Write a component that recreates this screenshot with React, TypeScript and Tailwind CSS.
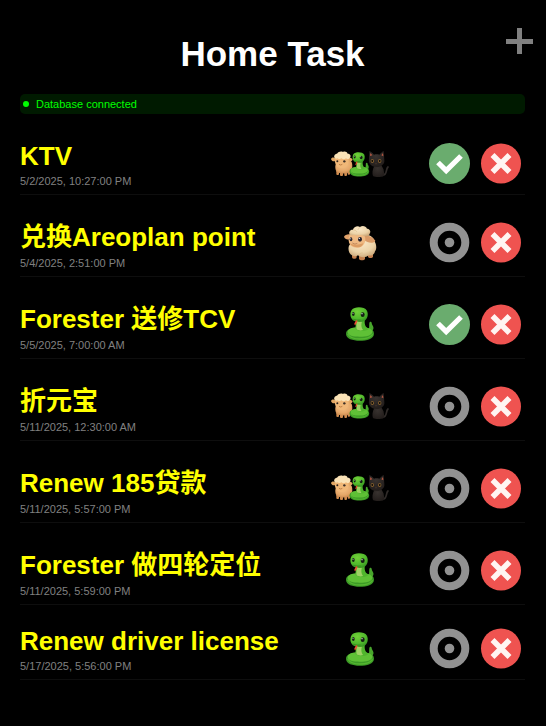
import React from "react";

type Owner = "sheep" | "snake" | "all";

interface Task {
  title: string;
  due: string;
  owner: Owner;
  done: boolean;
}

const tasks: Task[] = [
  { title: "KTV", due: "5/2/2025, 10:27:00 PM", owner: "all", done: true },
  { title: "兑换Areoplan point", due: "5/4/2025, 2:51:00 PM", owner: "sheep", done: false },
  { title: "Forester 送修TCV", due: "5/5/2025, 7:00:00 AM", owner: "snake", done: true },
  { title: "折元宝", due: "5/11/2025, 12:30:00 AM", owner: "all", done: false },
  { title: "Renew 185贷款", due: "5/11/2025, 5:57:00 PM", owner: "all", done: false },
  { title: "Forester 做四轮定位", due: "5/11/2025, 5:59:00 PM", owner: "snake", done: false },
  { title: "Renew driver license", due: "5/17/2025, 5:56:00 PM", owner: "snake", done: false },
];

const hasChinese = (text: string) => /[\u4e00-\u9fff]/.test(text);

function Gradients() {
  return (
    <svg className="absolute h-0 w-0" aria-hidden="true">
      <defs>
        <radialGradient id="wool" cx="0.45" cy="0.3" r="0.8">
          <stop offset="0" stopColor="#fbe9c8" />
          <stop offset="0.6" stopColor="#ecd3a8" />
          <stop offset="1" stopColor="#c49c6c" />
        </radialGradient>
        <radialGradient id="face" cx="0.45" cy="0.35" r="0.8">
          <stop offset="0" stopColor="#f6c48b" />
          <stop offset="0.6" stopColor="#e5a768" />
          <stop offset="1" stopColor="#b87540" />
        </radialGradient>
        <radialGradient id="scale" cx="0.4" cy="0.3" r="0.8">
          <stop offset="0" stopColor="#72d038" />
          <stop offset="0.6" stopColor="#50b82c" />
          <stop offset="1" stopColor="#2f8a1e" />
        </radialGradient>
        <radialGradient id="fur" cx="0.45" cy="0.3" r="0.8">
          <stop offset="0" stopColor="#38322f" />
          <stop offset="1" stopColor="#201b19" />
        </radialGradient>
      </defs>
    </svg>
  );
}

function Sheep() {
  return (
    <svg viewBox="30 21 120 120" className="h-10 w-10" role="img" aria-label="Sheep">
      <g fill="#c4804e">
        <rect x="66" y="112" width="14" height="19" rx="5" />
        <rect x="87" y="114" width="18" height="22" rx="6" />
        <rect x="114" y="110" width="15" height="19" rx="5" />
      </g>
      <path
        d="M57 92c-4 12 0 25 9 29 6 4 13 3 18 0 8 8 24 8 32 0 9 3 18-3 19-12 6-8 4-20 0-27-2-13-14-24-28-22-20-2-37 14-50 32z"
        fill="url(#wool)"
      />
      <path d="M85 121c3-5 9-8 13-7m18 7c3-3 5-7 5-11" fill="none" stroke="#d8b888" strokeWidth="2" />
      <path d="M62 58c-9-2-18 2-20 7 3 8 10 10 18 7z" fill="#e2a26a" />
      <path d="M103 62c12-3 26 5 33 15-4 9-22 8-33-1z" fill="#d99a66" />
      <path d="M59 59c10-10 38-9 45 4 5 13 0 26-10 32-11 6-27 3-34-6-5-8-6-21-1-30z" fill="#efb982" />
      <path d="M59 84c7 6 25 7 41 1-2 5-4 8-8 10-10 4-27 1-33-11z" fill="#dc9c62" />
      <path
        d="M58 56c-2-7 4-13 11-12 2-9 14-13 21-8 7-6 18-3 21 5 8 0 13 8 8 15-2 7-11 10-18 7-6-5-10-2-15-3-6 3-11 1-14-1-5 3-12 3-14-3z"
        fill="url(#wool)"
      />
      <path d="M71 46c4-1 8 1 9 4m11-13c-5 2-7 5-7 8" fill="none" stroke="#dbbe90" strokeWidth="2" />
      <ellipse cx="63" cy="73" rx="4" ry="6" fill="#28242d" />
      <ellipse cx="90" cy="73" rx="6" ry="7" fill="#28242d" />
      <circle cx="62" cy="71" r="1.5" fill="#fff" />
      <circle cx="88" cy="70" r="2" fill="#fff" />
      <path d="M67 84q8 6 15 1" fill="none" stroke="#a9714a" strokeWidth="2" />
    </svg>
  );
}

function SnakeShape() {
  return (
    <>
      <path d="M112 114c7-8 5-17 6-28 1-5 6-5 7-1 0 6 4 8 5 13 2 8-4 16-18 16z" fill="#48a62c" />
      <path d="M48 118c0-13 18-19 40-19s44 3 44 19c0 16-22 21-43 21s-41-6-41-21z" fill="#3c9a26" />
      <path d="M53 113c0-10 16-14 37-14 19 0 37 3 37 13 0 11-19 15-38 15s-36-3-36-14z" fill="#5fc036" />
      <path d="M53 119c8 13 22 15 37 15 16 0 30-3 38-14" fill="none" stroke="#55b631" strokeWidth="4" />
      <path d="M76 74c4 10 0 19 0 29 7 9 31 10 39 1-10-7-13-16-10-32z" fill="#50b52d" />
      <path d="M79 80c2 9-1 17 1 25 5 4 14 4 19 2-6-7-6-16-3-26z" fill="#9ed164" />
      <path d="M65 47c8-11 38-11 46 2 5 11 2 24-8 31-10 4-23 3-30 0-12-5-15-22-8-33z" fill="url(#scale)" />
      <ellipse cx="70" cy="59" rx="4" ry="6" fill="#152014" />
      <ellipse cx="98" cy="61" rx="6" ry="7" fill="#152014" />
      <circle cx="69" cy="57" r="1.5" fill="#e7ffe7" />
      <circle cx="96" cy="58" r="2" fill="#e7ffe7" />
      <path d="M70 75q10 4 22 2" fill="none" stroke="#2c801a" strokeWidth="2" />
      <path d="M80 78c-1 6-4 7-5 13" fill="none" stroke="#ed4a32" strokeWidth="5" />
    </>
  );
}

function Snake() {
  return (
    <svg viewBox="30 29 120 120" className="h-10 w-10" role="img" aria-label="Snake">
      <SnakeShape />
    </svg>
  );
}

function Everyone() {
  return (
    <svg viewBox="30 12 180 120" className="h-10 w-15" role="img" aria-label="Sheep, snake and cat">
      <g fill="#d18c4e">
        <rect x="49" y="91" width="8" height="14" rx="3" />
        <rect x="60" y="93" width="9" height="15" rx="3" />
        <rect x="73" y="93" width="8" height="15" rx="3" />
        <rect x="83" y="88" width="7" height="16" rx="3" />
      </g>
      <path d="M46 77c-1 12 3 21 13 22 8 3 22 2 29-3 9-3 11-18 7-30-10-14-41-13-49 11z" fill="url(#face)" />
      <path d="M47 54c-7-3-13-2-14 3 2 7 9 9 14 5zM81 55c7-3 15-1 17 4-4 7-12 7-17 3z" fill="#e2a764" />
      <path d="M46 54c3-14 34-15 39 0 3 12-1 24-9 28-8 4-20 3-26-4-5-7-7-16-4-24z" fill="#f1b878" />
      <path
        d="M43 52c-2-6 3-11 8-11 4-6 12-8 18-5 6-3 12 0 14 5 7 0 11 6 7 12-3 5-9 5-12 2-5 4-10 3-13 0-5 3-10 3-13 0-4 3-8 1-9-3z"
        fill="#fae2b6"
      />
      <circle cx="52" cy="64" r="3" fill="#2e211a" />
      <circle cx="73" cy="64" r="3.5" fill="#2e211a" />
      <circle cx="72" cy="63" r="1" fill="#fff" />
      <path d="M57 73q5 4 10 0" fill="none" stroke="#a7662f" strokeWidth="2" />
      <g transform="translate(55 8) scale(.7 .73)">
        <SnakeShape />
      </g>
      <path d="M186 106c17 1 10-18 18-25" fill="none" stroke="#302b29" strokeWidth="5" strokeLinecap="round" />
      <path d="M163 78c-6 11-7 23-4 30 7 4 24 4 32 0 4-14-3-28-9-33z" fill="url(#fur)" />
      <path d="M147 57l1-24c6 3 11 7 14 11 6-2 12-1 16 0 5-5 9-9 13-11l2 27c2 13-10 21-23 21-15 0-26-10-23-24z" fill="url(#fur)" />
      <path d="M150 48l1-9 6 7zM184 46l5-7 1 10z" fill="#b75742" />
      <circle cx="157" cy="63" r="5" fill="#b98438" />
      <circle cx="179" cy="63" r="5" fill="#b98438" />
      <circle cx="157" cy="63" r="3.5" fill="#15100d" />
      <circle cx="179" cy="63" r="3.5" fill="#15100d" />
      <path d="M166 71h4l-2 2z" fill="#bd765d" />
    </svg>
  );
}

function OwnerPicture({ owner }: { owner: Owner }) {
  if (owner === "sheep") return <Sheep />;
  if (owner === "snake") return <Snake />;
  return <Everyone />;
}

function StatusIcon({ done }: { done: boolean }) {
  return done ? (
    <svg viewBox="0 0 41 41" className="h-full w-full" aria-hidden="true">
      <circle cx="20.5" cy="20.5" r="20.5" fill="#6aac6e" />
      <path d="M9 19.5l8.2 8.2L32 13" fill="none" stroke="#fff" strokeWidth="5.2" />
    </svg>
  ) : (
    <svg viewBox="0 0 41 41" className="h-full w-full" aria-hidden="true">
      <circle cx="20.5" cy="20.5" r="15.8" fill="none" stroke="#929292" strokeWidth="8" />
      <circle cx="20.5" cy="20.5" r="4.8" fill="#929292" />
    </svg>
  );
}

function TaskRow({ task }: { task: Task }) {
  return (
    <li className="flex items-center border-b border-[#0e0e0e] pt-[19px] pr-1 pb-1.5">
      <div className="min-w-0 flex-1 pt-0.5">
        <h2
          className={
            hasChinese(task.title)
              ? "pt-1.5 pb-px text-[26px] leading-[30px] font-bold text-[#ffff00]"
              : "text-[26px] leading-[30px] font-bold text-[#ffff00]"
          }
        >
          {task.title}
        </h2>
        <p className="mt-1 text-[11px] leading-[13px] text-[#808080]">{task.due}</p>
      </div>
      <div className="mr-[39px] flex w-15 shrink-0 justify-center">
        <OwnerPicture owner={task.owner} />
      </div>
      <div className="flex shrink-0 gap-[11px]">
        <button type="button" className="h-[41px] w-[41px]" aria-label={task.done ? "Mark as not done" : "Mark as done"}>
          <StatusIcon done={task.done} />
        </button>
        <button type="button" className="h-[41px] w-10" aria-label="Delete task">
          <svg viewBox="0 0 40 40" className="h-full w-full" aria-hidden="true">
            <circle cx="20" cy="20" r="20" fill="#ef5350" />
            <path d="M11.5 11.5l17 17m0-17l-17 17" stroke="#fff5f2" strokeWidth="5.6" />
          </svg>
        </button>
      </div>
    </li>
  );
}

export default function App() {
  return (
    <main className="relative min-h-screen bg-black pt-8 pr-[21px] pb-10 pl-5 font-['Liberation_Sans','Noto_Sans_CJK_SC',sans-serif]">
      <Gradients />
      <h1 className="text-center text-[35px] leading-[44px] font-bold text-white">Home Task</h1>
      <button type="button" aria-label="Add task" className="absolute top-7 right-3 h-7 w-7">
        <svg viewBox="0 0 28 28" className="h-full w-full" aria-hidden="true">
          <path d="M0 13.5h27M13.5 0v26" stroke="#808080" strokeWidth="5" />
        </svg>
      </button>
      <div role="status" className="mt-[18px] flex h-5 items-center rounded-[5px] bg-[#001a00] pl-[3px] text-[11px] text-[#00ff00]">
        <span className="mr-[7px] h-1.5 w-1.5 rounded-full bg-[#00ff00]" />
        Database connected
      </div>
      <ul className="mt-1.5">
        {tasks.map((task) => (
          <TaskRow key={task.due} task={task} />
        ))}
      </ul>
    </main>
  );
}
